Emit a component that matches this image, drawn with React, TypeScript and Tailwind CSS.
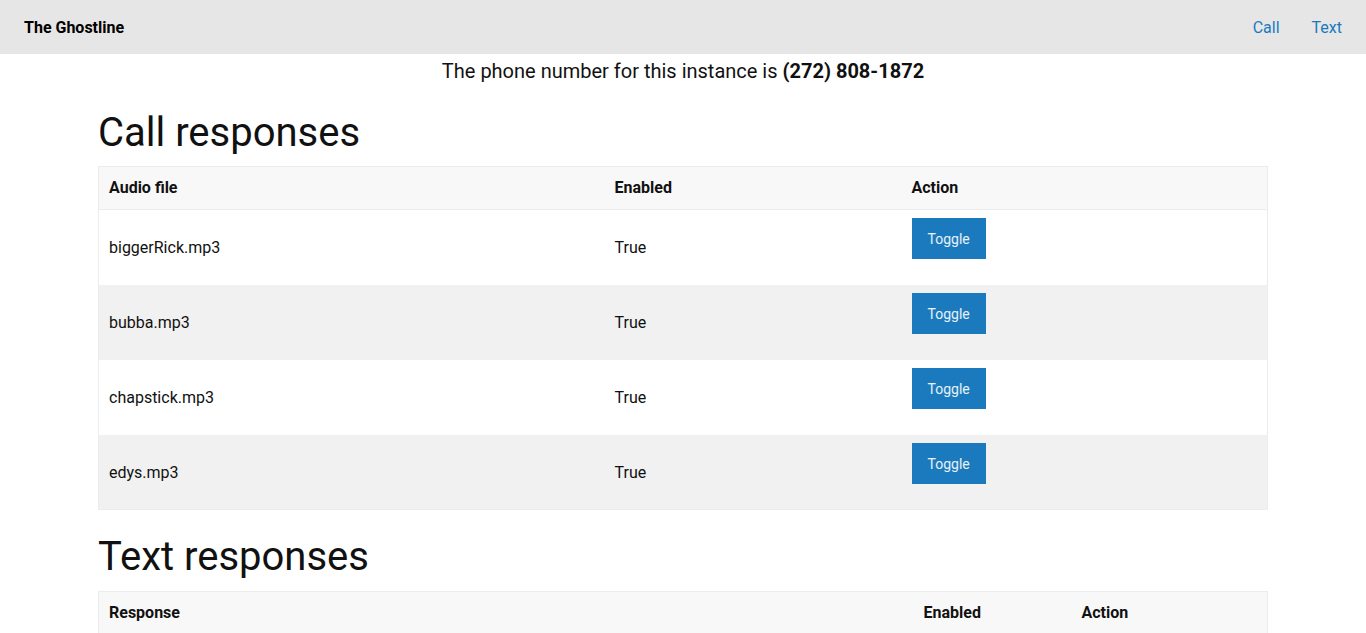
const CALLS = ["biggerRick.mp3", "bubba.mp3", "chapstick.mp3", "edys.mp3"];

function ToggleButton() {
  return (
    <button className="h-[41px] px-[16px] pt-[2px] bg-[#1b7abd] text-[14px] text-white/90 cursor-pointer">
      Toggle
    </button>
  );
}

export default function App() {
  return (
    <div className="min-h-screen bg-white text-[#111] font-['Roboto',sans-serif]">
      {/* Navbar */}
      <nav className="h-[54px] bg-[#e6e6e6] flex items-center justify-between px-6 pt-[2px]">
        <span className="font-bold text-[16px] text-black">The Ghostline</span>
        <div className="flex gap-8 text-[16px] text-[#1b7abd]">
          <a href="#">Call</a>
          <a href="#">Text</a>
        </div>
      </nav>

      <div className="w-[1170px] mx-auto">
        <p className="mt-[2px] text-center text-[20px] leading-[30px]">
          The phone number for this instance is <b>(272) 808-1872</b>
        </p>

        <h1 className="mt-[25px] mb-[11px] text-[40px] leading-[44px] font-normal">
          Call responses
        </h1>
        <table className="w-full border border-[#ececec] border-collapse text-[16px] table-fixed">
          <colgroup>
            <col className="w-[506px]" />
            <col className="w-[297px]" />
            <col />
          </colgroup>
          <thead>
            <tr className="bg-[#f8f8f8] border-b border-[#ececec]">
              <th className="h-[43px] px-[10px] text-left font-bold">Audio file</th>
              <th className="h-[43px] px-[10px] text-left font-bold">Enabled</th>
              <th className="h-[43px] px-[10px] text-left font-bold">Action</th>
            </tr>
          </thead>
          <tbody>
            {CALLS.map((name, i) => (
              <tr key={name} className={i % 2 === 1 ? "bg-[#f1f1f1]" : "bg-white"}>
                <td className="h-[75px] px-[10px] pt-[2px] align-middle">{name}</td>
                <td className="h-[75px] px-[10px] pt-[2px] align-middle">True</td>
                <td className="h-[75px] px-[10px] pt-2 align-top">
                  <ToggleButton />
                </td>
              </tr>
            ))}
          </tbody>
        </table>

        <h1 className="mt-[25px] mb-[12px] text-[40px] leading-[44px] font-normal">
          Text responses
        </h1>
        <table className="w-full border border-[#ececec] border-collapse text-[16px] table-fixed">
          <colgroup>
            <col className="w-[815px]" />
            <col className="w-[158px]" />
            <col />
          </colgroup>
          <thead>
            <tr className="bg-[#f8f8f8] border-b border-[#ececec]">
              <th className="h-[43px] px-[10px] text-left font-bold">Response</th>
              <th className="h-[43px] px-[10px] text-left font-bold">Enabled</th>
              <th className="h-[43px] px-[10px] text-left font-bold">Action</th>
            </tr>
          </thead>
          <tbody>
            <tr className="bg-white">
              <td className="h-[75px] px-[10px] pt-[2px]">Boo!</td>
              <td className="h-[75px] px-[10px] pt-[2px]">True</td>
              <td className="h-[75px] px-[10px] pt-2 align-top">
                <ToggleButton />
              </td>
            </tr>
          </tbody>
        </table>
      </div>
    </div>
  );
}
